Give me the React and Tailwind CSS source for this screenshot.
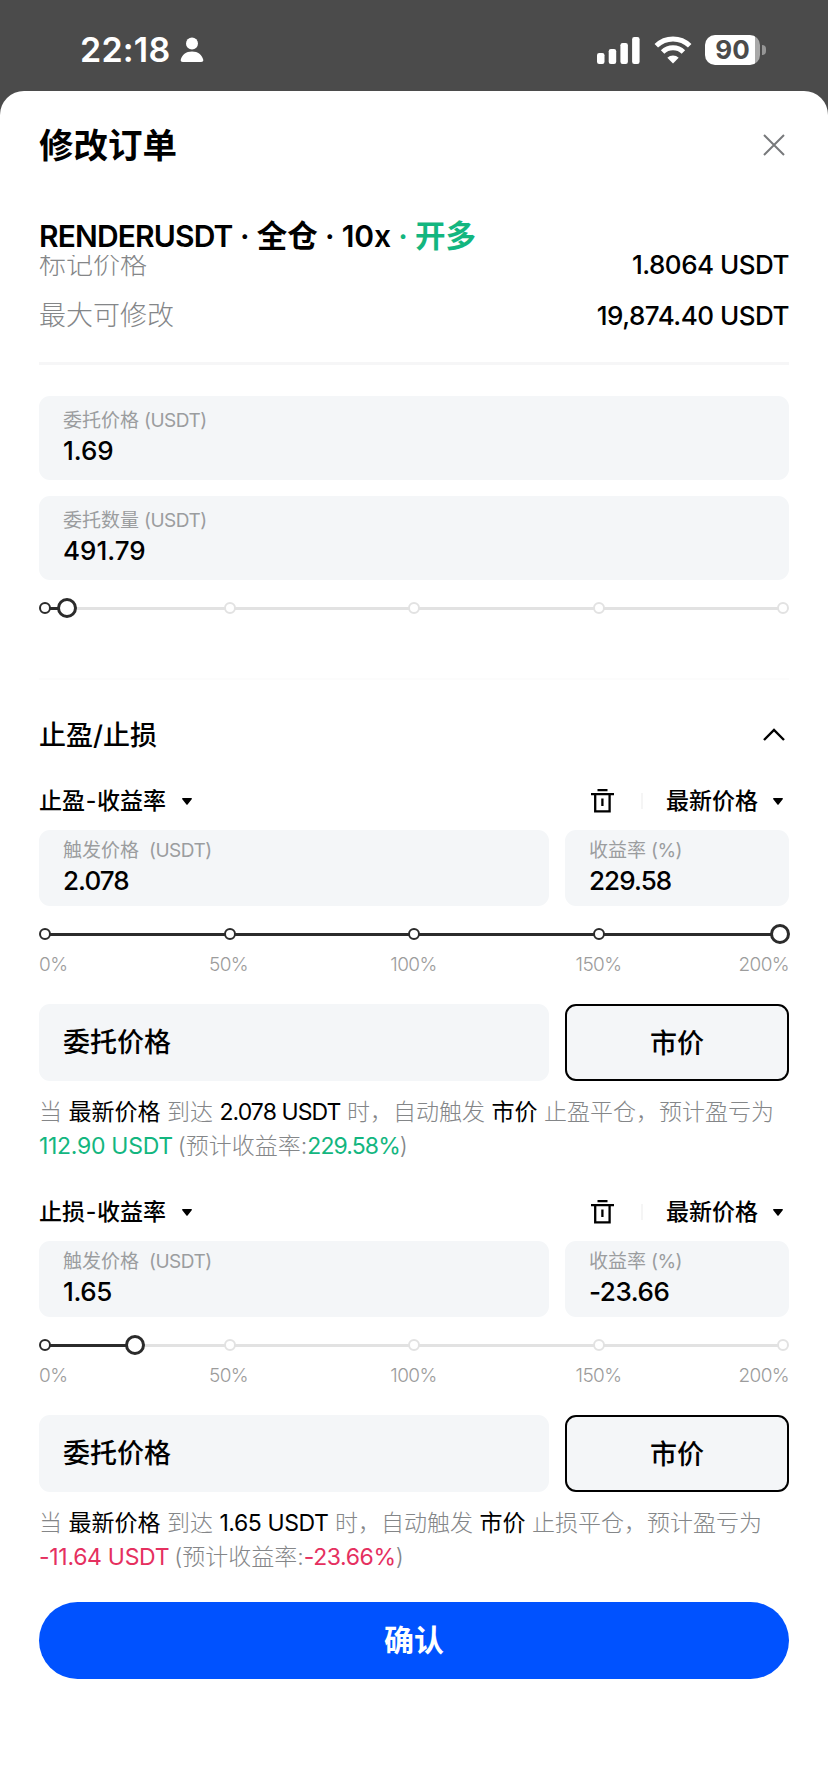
import React from "react";

const marks = ["0%", "50%", "100%", "150%", "200%"];

const StatusBar = () => (
  <div className="h-[91px] flex items-start justify-between pt-[30px] pl-[80px] pr-[62px] text-white">
    <div className="flex items-center h-[40px]">
      <span className="text-[34px] leading-[40px] font-semibold tracking-[0.2px]">22:18</span>
      <svg className="ml-[10px]" width="24" height="26" viewBox="0 0 24 26" fill="currentColor">
        <circle cx="12" cy="6.5" r="6" />
        <path d="M3 25C1 25 .4 24 .8 22.600C1.800 18 6 14.500 12 14.500S22.200 18 23.200 22.600C23.600 24 23 25 21 25Z" />
      </svg>
    </div>

    <div className="flex items-center h-[40px]">
      <svg width="43" height="27" viewBox="0 0 43 27" fill="currentColor">
        <rect x="0" y="16" width="7.500" height="11" rx="2.200" />
        <rect x="11.700" y="12" width="7.500" height="15" rx="2.200" />
        <rect x="23.400" y="6" width="7.500" height="21" rx="2.200" />
        <rect x="35.100" y="0" width="7.500" height="27" rx="2.200" />
      </svg>
      <svg className="ml-[14px]" width="38" height="28" viewBox="0 0 38 28" fill="none" stroke="currentColor" strokeWidth="5">
        <path d="M2.300 9.700A24 24 0 0 1 35.700 9.700" />
        <path d="M8.600 16A15 15 0 0 1 29.400 16" />
        <path d="M19 27.500L13.300 21.700A8.200 8.200 0 0 1 24.700 21.700Z" fill="currentColor" stroke="none" />
      </svg>
      <div className="ml-[13px] w-[55px] h-[30px] rounded-[10px] overflow-hidden flex items-center justify-center bg-linear-to-r from-white from-91% to-[#a8a8a8] to-91%">
        <span className="text-[26px] leading-[30px] font-bold text-[#4b4b4b]">90</span>
      </div>
      <div className="ml-[2px] w-[4px] h-[10px] rounded-r-full bg-[#969696]" />
    </div>
  </div>
);

const Field = ({ label, unit, value, className = "", unitClass = "ml-[5px]", valueClass = "" }) => (
  <div className={`bg-[#f4f6f8] rounded-[11px] pl-6 ${className}`}>
    <div className="text-[19px] leading-[24px] text-[#9b9d9f]">
      {label}
      <span className={`tracking-[-0.5px] ${unitClass}`}>{unit}</span>
    </div>
    <div className={`mt-[2px] text-[26px] leading-[32px] font-medium ${valueClass}`}>{value}</div>
  </div>
);

// offset is the thumb centre, in px from the left end of the track
const Slider = ({ offset }) => (
  <div className="relative h-5 flex items-center justify-between">
    <div className="absolute left-1.5 right-1.5 h-[3px] bg-[#e2e2e2]" />
    <div className="absolute left-1.5 h-[3px] bg-[#2b2b2b]" style={{ width: offset - 6 }} />
    {marks.map((mark, i) => (
      <span
        key={mark}
        className={`relative size-3 rounded-full bg-white border-2 ${
          i * 184.5 < offset ? "border-[#2b2b2b]" : "border-[#e2e2e2]"
        } ${i === 4 && offset > 730 ? "invisible" : ""}`}
      />
    ))}
    <span
      className="absolute size-5 rounded-full bg-white border-3 border-[#2b2b2b]"
      style={{ left: offset - 10 }}
    />
  </div>
);

const Caret = () => (
  <svg width="10" height="7" viewBox="0 0 10 7" fill="currentColor">
    <path d="M.8 0H9.200C9.900 0 10.200.7 9.700 1.200L5.600 6.400C5.300 6.800 4.700 6.800 4.400 6.400L.3 1.200C-.2.700.1 0 .8 0Z" />
  </svg>
);

const TrashIcon = () => (
  <svg width="23" height="24" viewBox="0 0 23 24" fill="none" stroke="currentColor" strokeWidth="2.300">
    <path d="M6.500 1.200H16.500M0 5.200H23M4.200 5.200V22.300H18.600V5.200M11.400 9.500V17" />
  </svg>
);

const TriggerBlock = ({ type, price, rate, offset, pnl, tone, tight }) => (
  <section className="h-[411px]">
    <div className="flex items-center h-[46px] text-[23px] font-medium">
      <span>{type}<span className="mx-[0.7px]">-</span>收益率</span>
      <span className="ml-[16px]"><Caret /></span>
      <span className="ml-auto"><TrashIcon /></span>
      <span className="ml-[27px] w-[2px] h-4 bg-[#f5f5f5]" />
      <span className="ml-[23px]">最新价格</span>
      <span className="ml-[15px] mr-[6px]"><Caret /></span>
    </div>

    <div className="mt-[6px] flex gap-4">
      <Field
        className="w-[510px] h-[76px] pt-[9px]"
        label="触发价格"
        unit="(USDT)"
        unitClass="ml-[10px]"
        value={price}
        valueClass={tight}
      />
      <Field
        className="flex-1 h-[76px] pt-[9px]"
        label="收益率"
        unit="(%)"
        value={rate}
        valueClass={tight}
      />
    </div>

    <div className="mt-[18px]">
      <Slider offset={offset} />
    </div>
    <div className="mt-[9px] flex text-[19px] leading-[24px] text-[#9c9c9c] text-center font-light tracking-[-0.6px]">
      <span className="w-[97px] text-left">{marks[0]}</span>
      <span className="w-[185px]">{marks[1]}</span>
      <span className="w-[185px]">{marks[2]}</span>
      <span className="w-[185px]">{marks[3]}</span>
      <span className="flex-1 text-right">{marks[4]}</span>
    </div>

    <div className="mt-[27px] flex gap-4 text-[27px] font-medium">
      <div className="w-[510px] h-[77px] pl-6 pt-[2px] flex items-center rounded-[11px] bg-[#f4f6f8]">委托价格</div>
      <button className="flex-1 h-[77px] pt-[3px] rounded-[11px] border-2 border-black bg-[#f4f6f8]">市价</button>
    </div>

    <p className="mt-[14px] text-[23px] leading-[34px] text-[#848688] font-light whitespace-nowrap">
      当 <span className="text-black font-normal">最新价格</span> 到达{" "}
      <span className={`text-black font-normal ${tight}`}>{price} USDT</span> 时，自动触发{" "}
      <span className="text-black font-normal">市价</span> {type}平仓，预计盈亏为
      <br />
      <span className={`font-normal tracking-[-0.3px] ${tone}`}>{pnl} USDT</span>
      <span className="ml-[5px]">(预计收益率:</span>
      <span className={`font-normal ${tight} ${tone}`}>{rate}%</span>)
    </p>
  </section>
);

const App = () => {
  return (
    <div className="w-[828px] h-[1792px] overflow-hidden bg-[#4b4b4b] text-black font-['Inter','Noto_Sans_CJK_SC',sans-serif]">
      <StatusBar />

      <main className="h-[1701px] bg-white rounded-t-[24px] px-[39px]">
        <div className="flex items-center justify-between h-[110px]">
          <h1 className="text-[34.5px] font-bold">修改订单</h1>
          <svg className="mr-[4px] mb-[2px]" width="22" height="22" viewBox="0 0 22 22" fill="none" stroke="#77797b" strokeWidth="2">
            <path d="M1 1L21 21M21 1L1 21" />
          </svg>
        </div>

        <h2 className="mt-[15px] h-[39px] text-[30px] leading-[39px] font-semibold whitespace-nowrap tracking-[-0.15px]">
          <span className="tracking-[-0.85px]">RENDERUSDT</span> · <span className="text-[30.5px]">全仓</span> · 10x{" "}
          <span className="text-[#13b67f]">· <span className="text-[30.5px]">开多</span></span>
        </h2>

        {/* scrolled list, first row is cut off under the header */}
        <div className="h-[86px] overflow-hidden flex flex-col justify-end text-[27px] leading-[51px]">
          <div className="h-[51px] shrink-0 flex justify-between">
            <span className="text-[#848688] font-light">标记价格</span>
            <span className="text-[26px] font-medium tracking-[-0.5px]">1.8064 USDT</span>
          </div>
          <div className="h-[51px] shrink-0 flex justify-between">
            <span className="text-[#848688] font-light">最大可修改</span>
            <span className="text-[26px] font-medium tracking-[-0.5px]">19,874.40 USDT</span>
          </div>
        </div>

        <div className="mt-[21px] h-[3px] bg-[#f6f6f7]" />

        <Field className="mt-[31px] h-[84px] pt-[13px]" label="委托价格" unit="(USDT)" value="1.69" />
        <Field className="mt-[16px] h-[84px] pt-[13px]" label="委托数量" unit="(USDT)" value="491.79" />
        <div className="mt-[18px]">
          <Slider offset={27.500} />
        </div>

        <div className="mt-[60px] h-[2px] bg-[#fcfcfc]" />

        <div className="mt-[30px] flex items-center justify-between h-[50px] text-[27px] font-medium">
          <span className="pt-[2px]">止盈/止损</span>
          <svg className="mr-[4px] mb-[2px]" width="22" height="13" viewBox="0 0 22 13" fill="none" stroke="currentColor" strokeWidth="2.400">
            <path d="M1 12L11 2L21 12" />
          </svg>
        </div>

        <div className="mt-[18px]">
          <TriggerBlock
            type="止盈"
            price="2.078"
            rate="229.58"
            offset={740.500}
            pnl="112.90"
            tone="text-[#13b67f]"
            tight="tracking-[-0.9px]"
          />
          <TriggerBlock
            type="止损"
            price="1.65"
            rate="-23.66"
            offset={96}
            pnl="-11.64"
            tone="text-[#e5305f]"
            tight="tracking-[-0.4px]"
          />
        </div>

        <button className="mt-[2px] w-full h-[77px] rounded-full bg-[#0052ff] text-white text-[30px] font-bold">
          确认
        </button>
      </main>
    </div>
  );
};

export default App;
